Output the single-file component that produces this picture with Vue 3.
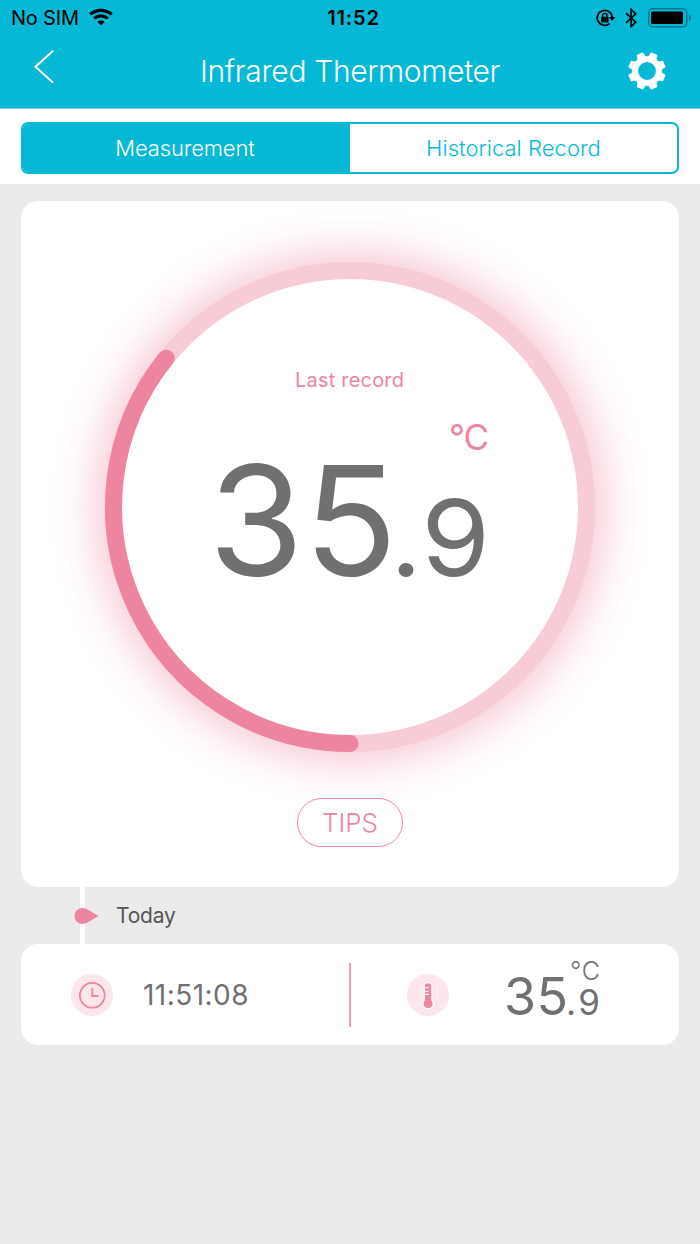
<template>
  <div class="app">
    <header class="header">
      <div class="status-bar">
        <div class="status-left">
          <span class="carrier">No SIM</span>
          <svg class="wifi" width="24" height="18" viewBox="0 0 24 18">
            <g fill="none" stroke="#000" stroke-width="3.2">
              <path d="M1.3 6.4C7.2 0.9 16.8 0.9 22.7 6.4" />
              <path d="M5.2 10.4C9 6.9 15 6.9 18.8 10.4" />
            </g>
            <path d="M8.3 13.8C10.4 11.9 13.6 11.9 15.7 13.8L12 17.4Z" fill="#000" />
          </svg>
        </div>
        <span class="clock">11:52</span>
        <div class="status-right">
          <svg width="20" height="18" viewBox="0 0 20 18">
            <path d="M13.6 14.6A7.5 7.5 0 1 1 16.2 8" fill="none" stroke="#000" stroke-width="1.7" />
            <path d="M12.9 8H19.3L16.1 11.9Z" fill="#000" />
            <rect x="5.1" y="7.8" width="7.4" height="5.6" rx="0.8" fill="#000" />
            <path d="M6.6 8.4V6.6a2.2 2.2 0 0 1 4.4 0v1.8" fill="none" stroke="#000" stroke-width="1.3" />
          </svg>
          <svg class="bluetooth" width="12" height="20" viewBox="0 0 12 20">
            <path d="M1 5.2L10.7 14.2L6.1 18.6V1.4L10.7 5.8L1 14.8" fill="none" stroke="#000" stroke-width="1.6" />
          </svg>
          <svg class="battery" width="44" height="20" viewBox="0 0 44 20">
            <rect x="0.8" y="0.8" width="38" height="18" rx="4" fill="none" stroke="#04788a" stroke-width="1.5" />
            <rect x="3" y="3.4" width="32" height="12.6" rx="1.5" fill="#000" />
            <path d="M41 6.5C43.6 7.8 43.6 12 41 13.3Z" fill="#04788a" />
          </svg>
        </div>
      </div>
      <div class="nav-bar">
        <button class="nav-button back" aria-label="Back">
          <svg width="22" height="36" viewBox="0 0 22 36">
            <path d="M19.6 2.2L2.4 17.7L19.6 33.2" fill="none" stroke="#fff" stroke-width="2" stroke-linecap="round" stroke-linejoin="round" />
          </svg>
        </button>
        <h1 class="title">Infrared Thermometer</h1>
        <button class="nav-button settings" aria-label="Settings">
          <svg width="40" height="40" viewBox="-20 -20 40 40">
            <path :d="gearPath" fill="#fff" fill-rule="evenodd" stroke="#fff" stroke-width="1.6" stroke-linejoin="round" />
          </svg>
        </button>
      </div>
    </header>

    <div class="tabs-wrap">
      <div class="tabs">
        <button
          v-for="tab in tabs"
          :key="tab"
          class="tab"
          :class="{ active: tab === activeTab }"
          @click="activeTab = tab"
        >
          <span>{{ tab }}</span>
        </button>
      </div>
    </div>

    <main class="content">
      <section class="card gauge-card">
        <svg class="gauge" width="658" height="597" viewBox="-329 -306 658 597">
          <defs>
            <radialGradient id="glow" gradientUnits="userSpaceOnUse" cx="0" cy="0" r="304">
              <stop offset="0.8" stop-color="#f9d8e0" />
              <stop offset="0.84" stop-color="#fbe4ea" />
              <stop offset="0.88" stop-color="#fdf1f4" />
              <stop offset="0.92" stop-color="#fef9fa" />
              <stop offset="0.96" stop-color="#fffdfd" />
              <stop offset="1" stop-color="#fff" />
            </radialGradient>
          </defs>
          <circle r="304" fill="url(#glow)" />
          <circle :r="RADIUS" fill="#fff" stroke="#f8ccd7" stroke-width="17" />
          <path :d="arcPath" fill="none" stroke="#ee85a0" stroke-width="17" stroke-linecap="round" />
          <text class="gauge-label" x="-55" y="-120" textLength="109">Last record</text>
          <text class="gauge-unit" x="99" y="-57" textLength="40">°C</text>
          <text class="gauge-int" x="-141.500" y="69" textLength="189" lengthAdjust="spacingAndGlyphs">{{ whole }}</text>
          <text class="gauge-dec" x="40" y="69" textLength="100" lengthAdjust="spacingAndGlyphs">.{{ decimal }}</text>
        </svg>
        <button class="tips">TIPS</button>
      </section>

      <div class="day">
        <svg class="day-marker" width="25" height="57" viewBox="0 0 25 57">
          <rect x="6" y="0" width="5" height="57" fill="#fff" />
          <path d="M8.5 21C10.5 21 12 21.6 13.5 22.4L24.5 29L13.5 35.6C12 36.5 10.5 37 8.5 37A8 8 0 0 1 8.5 21Z" fill="#ee85a0" />
        </svg>
        <span class="day-label">Today</span>
      </div>

      <section class="card record">
        <div class="record-half record-time">
          <svg width="42" height="42" viewBox="0 0 42 42">
            <circle cx="21" cy="21" r="21" fill="#fce5eb" />
            <circle cx="21.3" cy="21.3" r="12.4" fill="none" stroke="#ee85a0" stroke-width="1.8" />
            <path d="M21.3 14V22H27.5" fill="none" stroke="#ee85a0" stroke-width="1.8" />
          </svg>
          <span class="time">{{ time }}</span>
        </div>
        <div class="divider"></div>
        <div class="record-half record-temp">
          <svg width="42" height="42" viewBox="0 0 42 42">
            <circle cx="21" cy="21" r="21" fill="#fce5eb" />
            <path d="M17.3 12.4a3.8 3.8 0 0 1 7.6 0V26a5.2 5.2 0 1 1-7.6 0Z" fill="#ee85a0" stroke="#fff" stroke-width="1.2" />
            <path d="M17.2 13.8h4.6M17.2 17.2h4.6M17.2 20.4h4.6" stroke="#fff" stroke-width="1.1" />
          </svg>
          <svg class="temp" width="110" height="90" viewBox="500 949.5 110 90">
            <text class="temp-unit" x="570" y="979.5" textLength="30">°C</text>
            <text class="temp-int" x="504" y="1014" textLength="64">{{ whole }}</text>
            <text class="temp-dec" x="566" y="1014" textLength="34">.{{ decimal }}</text>
          </svg>
        </div>
      </section>
    </main>
  </div>
</template>

<script setup>
import { ref, computed } from 'vue'

const RADIUS = 236.5

const tabs = ['Measurement', 'Historical Record']
const activeTab = ref('Measurement')

const temperature = ref(35.9)
const time = ref('11:51:08')
const progress = ref(129)

const whole = computed(() => temperature.value.toFixed(1).split('.')[0])
const decimal = computed(() => temperature.value.toFixed(1).split('.')[1])

// arc starts at the bottom of the ring and runs clockwise
const arcPath = computed(() => {
  const angle = ((90 + progress.value) * Math.PI) / 180
  const x = RADIUS * Math.cos(angle)
  const y = RADIUS * Math.sin(angle)
  return `M0 ${RADIUS}A${RADIUS} ${RADIUS} 0 0 1 ${x.toFixed(2)} ${y.toFixed(2)}`
})

// eight teeth around a ring with a round hole
const polar = (r, deg) => {
  const a = (deg * Math.PI) / 180
  return `${(r * Math.cos(a)).toFixed(2)} ${(r * Math.sin(a)).toFixed(2)}`
}
let outline = ''
for (let i = 0; i < 8; i++) {
  const mid = i * 45 + 22.5
  outline += `${i ? 'L' : 'M'}${polar(15.2, mid - 12.5)}L${polar(18.2, mid - 9)}`
  outline += `L${polar(18.2, mid + 9)}L${polar(15.2, mid + 12.5)}Q${polar(12.8, mid + 22.5)} ${polar(15.2, mid + 32.5)}`
}
const gearPath = `${outline}ZM9.7 0A9.7 9.7 0 1 0 -9.7 0A9.7 9.7 0 1 0 9.7 0Z`
</script>

<style>
body {
  margin: 0;
  background: #ebebeb;
}
</style>

<style scoped>
.app {
  width: 700px;
  min-height: 1244px;
  background: #ebebeb;
  font-family: Inter, "Liberation Sans", sans-serif;
}

button {
  margin: 0;
  padding: 0;
  border: none;
  background: none;
  font-family: inherit;
  cursor: pointer;
}

svg {
  display: block;
  flex: none;
}

.header {
  height: 108px;
  background: #05b9d6;
  border-bottom: 1px solid #8cc9d6;
}

.status-bar {
  display: grid;
  grid-template-columns: 1fr auto 1fr;
  align-items: center;
  height: 36px;
  padding: 0 8px 0 11px;
  font-size: 20px;
  color: #000;
}

.status-left,
.status-right {
  display: flex;
  align-items: center;
}

.status-right {
  justify-content: flex-end;
}

.carrier {
  letter-spacing: -0.2px;
}

.wifi {
  margin: 0 0 2px 10px;
}

.clock {
  padding-left: 4px;
  font-weight: 600;
  letter-spacing: 0.8px;
}

.bluetooth {
  margin: 0 11px 0 9px;
}

.nav-bar {
  display: flex;
  align-items: center;
  justify-content: space-between;
  height: 70px;
  padding: 0 33px;
}

.back {
  width: 40px;
  margin-bottom: 8px;
}

.title {
  margin: 0;
  font-size: 30px;
  font-weight: 300;
  color: #fff;
  letter-spacing: -0.35px;
}

.settings {
  display: flex;
  justify-content: flex-end;
  width: 40px;
}

.tabs-wrap {
  height: 75px;
  padding: 13px 21px 0;
  background: #fff;
  box-sizing: border-box;
}

.tabs {
  display: flex;
  height: 52px;
  border: 2px solid #05b9d6;
  border-radius: 7px;
  box-sizing: border-box;
  overflow: hidden;
}

.tab {
  width: 50%;
  box-sizing: border-box;
  font-size: 22px;
  font-weight: 300;
  color: #05b9d6;
  letter-spacing: 0.05px;
}

.tab.active {
  padding-right: 3px;
  background: #05b9d6;
  color: #fff;
  letter-spacing: -0.15px;
}

.content {
  padding: 17px 21px 0;
}

.card {
  background: #fff;
  border-radius: 17px;
}

.gauge-card {
  display: flex;
  flex-direction: column;
  align-items: center;
  height: 686px;
}

.gauge-label {
  font-size: 20px;
  fill: #ee85a0;
}

.gauge-unit {
  font-size: 35px;
  fill: #ee85a0;
}

.gauge-int {
  font-size: 153px;
  fill: #707070;
}

.gauge-dec {
  font-size: 106px;
  fill: #707070;
}

.tips {
  width: 106px;
  height: 49px;
  border: 1.5px solid #ee85a0;
  border-radius: 25px;
  font-size: 26px;
  font-weight: 300;
  color: #ee85a0;
}

.day {
  display: flex;
  align-items: center;
  height: 57px;
  padding-left: 53px;
}

.day-label {
  margin-left: 17px;
  font-size: 21px;
  color: #555;
  letter-spacing: -0.2px;
}

.record {
  display: flex;
  align-items: center;
  height: 101px;
}

.record-half {
  display: flex;
  align-items: center;
  width: 328px;
  box-sizing: border-box;
}

.record-time {
  padding-left: 50px;
}

.time {
  margin-left: 30px;
  font-size: 28px;
  color: #707070;
  letter-spacing: 0.45px;
}

.divider {
  width: 2px;
  height: 64px;
  background: #f29db2;
}

.record-temp {
  padding-left: 56px;
}

.temp {
  margin-left: 51px;
}

.temp-unit {
  font-size: 25px;
  font-weight: 300;
  fill: #707070;
}

.temp-int {
  font-size: 52px;
  fill: #707070;
}

.temp-dec {
  font-size: 35px;
  fill: #707070;
}
</style>
